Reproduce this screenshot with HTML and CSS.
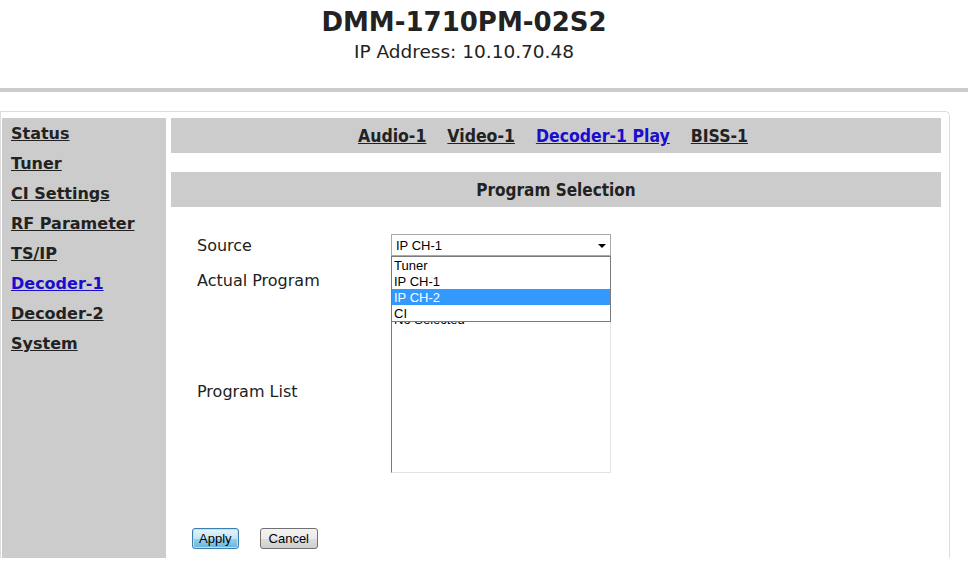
FILE: index.html
```html
<!DOCTYPE html>
<html>
<head>
<meta charset="utf-8">
<title>DMM-1710PM-02S2</title>
<link rel="stylesheet" href="styles.css">
</head>
<body>
<header class="header">
  <h1 class="title">DMM-1710PM-02S2</h1>
  <div class="ip">IP Address: 10.10.70.48</div>
</header>
<div class="rule"></div>
<div class="frame">
  <nav class="sidebar">
    <a href="#" class="side-link">Status</a>
    <a href="#" class="side-link">Tuner</a>
    <a href="#" class="side-link">CI Settings</a>
    <a href="#" class="side-link">RF Parameter</a>
    <a href="#" class="side-link">TS/IP</a>
    <a href="#" class="side-link active">Decoder-1</a>
    <a href="#" class="side-link">Decoder-2</a>
    <a href="#" class="side-link">System</a>
  </nav>
  <main class="main">
    <div class="tabs">
      <a href="#" class="tab">Audio-1</a>
      <a href="#" class="tab">Video-1</a>
      <a href="#" class="tab active">Decoder-1 Play</a>
      <a href="#" class="tab">BISS-1</a>
    </div>
    <div class="section">Program Selection</div>
    <div class="form">
      <div class="label">Source</div>
      <div class="select-wrap">
        <div class="select">
          <span>IP CH-1</span>
          <span class="arrow"></span>
        </div>
        <div class="dropdown">
          <div class="option">Tuner</div>
          <div class="option">IP CH-1</div>
          <div class="option selected">IP CH-2</div>
          <div class="option">CI</div>
        </div>
      </div>
      <div class="label label-top">Actual Program</div>
      <div class="value"></div>
      <div class="label">Program List</div>
      <div class="listbox">
        <div class="list-item">No Selected</div>
      </div>
    </div>
    <div class="buttons">
      <button class="btn btn-focus">Apply</button>
      <button class="btn">Cancel</button>
    </div>
  </main>
</div>
</body>
</html>
```

FILE: styles.css
```css
html, body {
  margin: 0;
  padding: 0;
  background: #ffffff;
}
body {
  font-family: "DejaVu Sans", Verdana, sans-serif;
  color: #222222;
  width: 968px;
  height: 564px;
  overflow: hidden;
}
.header {
  text-align: center;
  padding-top: 5px;
  padding-right: 40px;
}
.title {
  margin: 0;
  font-size: 26px;
  line-height: 34px;
  font-weight: bold;
  color: #222222;
}
.ip {
  font-size: 18.5px;
  line-height: 24px;
  padding-top: 1px;
  color: #222222;
}
.rule {
  margin-top: 24px;
  height: 4px;
  background: #cccccc;
}
.frame {
  margin-top: 19px;
  border: 1px solid #dddddd;
  border-bottom: none;
  border-top-right-radius: 5px;
  padding: 6px 8px 0 1px;
  box-sizing: content-box;
  display: flex;
  gap: 5px;
  width: 939px;
}
.sidebar {
  box-sizing: border-box;
  width: 164px;
  height: 440px;
  padding-top: 1px;
  background: #cccccc;
  display: flex;
  flex-direction: column;
  flex: none;
}
.side-link {
  display: block;
  padding-left: 9px;
  line-height: 30px;
  font-size: 16px;
  font-weight: bold;
  color: #222222;
  text-decoration: underline;
}
.side-link.active {
  color: #1a0dcc;
}
.main {
  width: 770px;
  flex: none;
}
.tabs {
  box-sizing: border-box;
  height: 35px;
  padding-top: 1px;
  background: #cccccc;
  display: flex;
  justify-content: center;
  align-items: center;
  gap: 21px;
  padding-right: 6px;
}
.tab {
  font-family: "DejaVu Sans Condensed", "DejaVu Sans", sans-serif;
  font-stretch: condensed;
  font-weight: bold;
  font-size: 17.5px;
  color: #222222;
  text-decoration: underline;
}
.tab.active {
  color: #1a0dcc;
}
.section {
  margin-top: 19px;
  height: 35px;
  line-height: 37px;
  background: #cccccc;
  text-align: center;
  font-family: "DejaVu Sans Condensed", "DejaVu Sans", sans-serif;
  font-stretch: condensed;
  font-weight: bold;
  font-size: 17px;
  color: #222222;
}
.form {
  margin-top: 27px;
  padding-left: 26px;
  display: grid;
  grid-template-columns: 194px 220px;
  grid-template-rows: 22px 53px 164px;
  align-items: center;
}
.label {
  font-size: 16px;
  line-height: 20px;
  padding-top: 2px;
  color: #222222;
}
.label-top {
  align-self: start;
  padding-top: 15px;
}
.select-wrap {
  position: relative;
  height: 22px;
  z-index: 2;
}
.select {
  box-sizing: border-box;
  height: 22px;
  width: 220px;
  border: 1px solid #a9a9a9;
  background: #ffffff;
  display: flex;
  align-items: center;
  justify-content: space-between;
  padding: 0 4px 0 4px;
  font-family: "Liberation Sans", Arial, sans-serif;
  font-size: 13px;
  color: #000000;
}
.arrow {
  width: 0;
  height: 0;
  border-left: 4px solid transparent;
  border-right: 4px solid transparent;
  border-top: 4px solid #000000;
  margin-top: 2px;
}
.dropdown {
  position: absolute;
  top: 22px;
  left: 0;
  width: 220px;
  box-sizing: border-box;
  border: 1px solid #7a7a7a;
  background: #ffffff;
}
.option {
  height: 16px;
  line-height: 17px;
  padding-left: 2px;
  font-family: "Liberation Sans", Arial, sans-serif;
  font-size: 13px;
  color: #000000;
}
.option.selected {
  background: #3399ff;
  color: #ffffff;
}
.listbox {
  box-sizing: border-box;
  height: 164px;
  width: 220px;
  border: 1px solid #e3e3e3;
  border-left-color: #7a7a7a;
  border-top-color: #7a7a7a;
  background: #ffffff;
  font-family: "Liberation Sans", Arial, sans-serif;
  font-size: 13px;
  color: #000000;
  align-self: stretch;
}
.list-item {
  padding: 2px 0 0 2px;
  line-height: 16px;
}
.buttons {
  margin-top: 55px;
  padding-left: 21px;
  display: flex;
  gap: 21px;
}
.btn {
  height: 21px;
  box-sizing: border-box;
  padding: 0 7px;
  font-family: "Liberation Sans", Arial, sans-serif;
  font-size: 13px;
  color: #000000;
  border: 1px solid #707070;
  border-radius: 3px;
  background: linear-gradient(#f2f2f2 0%, #ebebeb 50%, #dddddd 51%, #cfcfcf 100%);
}
.btn-focus {
  border-color: #3c7fb1;
  background: linear-gradient(#e5f4fc 0%, #c4e5f6 50%, #98d1ef 51%, #68b3db 100%);
  box-shadow: inset 0 0 0 1px #b9e0f5;
  padding: 0 6px;
}
.btn + .btn {
  padding: 0 8px;
}
```
